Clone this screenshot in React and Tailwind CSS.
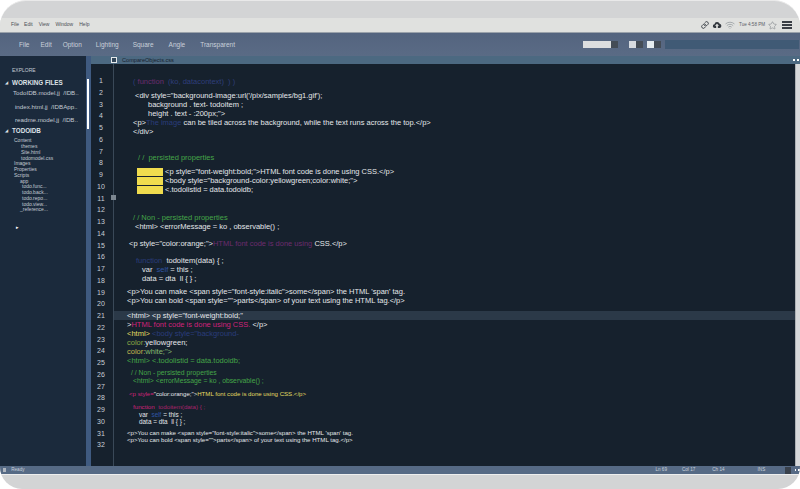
import { Link, Star, Wifi } from 'lucide-react';

const menus = [
    ['File', 'ml-[11px]'],
    ['Edit', 'ml-[5px]'],
    ['View', 'ml-[6px]'],
    ['Window', 'ml-[6px]'],
    ['Help', 'ml-[6px]'],
];

const tools = [
    ['File', 'ml-[19px]'],
    ['Edit', 'ml-[11px]'],
    ['Option', 'ml-[11px]'],
    ['Lighting', 'ml-[14px]'],
    ['Square', 'ml-[14px]'],
    ['Angle', 'ml-[15px]'],
    ['Transparent', 'ml-[15px]'],
];

const tree = [
    ['Content', 'pl-[14px]'],
    ['themes', 'pl-[21px]'],
    ['Site.html', 'pl-[21px]'],
    ['todomodel.css', 'pl-[21px]'],
    ['Images', 'pl-[14px]'],
    ['Properties', 'pl-[14px]'],
    ['Scripts', 'pl-[14px]'],
    ['app', 'pl-[20px]'],
    ['todo.func...', 'pl-[22px]'],
    ['todo.back...', 'pl-[22px]'],
    ['todo.repo...', 'pl-[22px]'],
    ['todo.view...', 'pl-[22px]'],
    ['_reference...', 'pl-[20px]'],
];

const lineNumbers = Array.from({ length: 32 }, (_, i) => i + 1);

function Stepper({ light, wide }) {
    return (
        <div className="flex h-[7px]">
            <div className={wide ? 'w-[28px] bg-[#dcdedf]' : `w-[7px] ${light}`} />
            <div className="w-[7px] bg-[#444c56]" />
        </div>
    );
}

function Sidebar() {
    return (
        <div className="w-[86px] shrink-0 bg-[#1b2a3c] text-[#c3cad3] flex flex-col">
            <div className="h-[8px] mt-[10px] pl-[12px] text-[5px] leading-[8px]">EXPLORE</div>
            <div className="h-[9px] mt-[4px] pl-[5px] flex items-center text-[6.3px] leading-[9px] font-bold text-[#dfe3e8]">
                <span className="w-[7px] text-[4px]">◢</span>WORKING FILES
            </div>
            <div className="h-[9px] mt-[1px] pl-[13px] text-[6.2px] leading-[9px] whitespace-nowrap">TodoIDB.model.jj&nbsp; /IDB..</div>
            <div className="h-[9px] mt-[5px] pl-[15px] text-[6.2px] leading-[9px] whitespace-nowrap">index.html.jj&nbsp; /IDBApp..</div>
            <div className="h-[9px] mt-[4px] pl-[15px] text-[6.2px] leading-[9px] whitespace-nowrap">readme.model.jj&nbsp; /IDB..</div>
            <div className="h-[9px] mt-[2px] pl-[5px] flex items-center text-[6.3px] leading-[9px] font-bold text-[#dfe3e8]">
                <span className="w-[7px] text-[4px]">◢</span>TODOIDB
            </div>
            <div className="mt-[3.3px] flex flex-col text-[5px] leading-[5.75px]">
                {tree.map(([name, indent]) => (
                    <div key={name} className={`h-[5.75px] whitespace-nowrap ${indent}`}>{name}</div>
                ))}
            </div>
            <div className="mt-[10.5px] pl-[16px] text-[5px] leading-[6px] text-white">▸</div>
        </div>
    );
}

function Gutter() {
    return (
        <div className="relative w-[23px] shrink-0 pt-[11px] pr-[2px] border-r border-[#3a4958] flex flex-col text-[7px] text-[#c7ced6]">
            {lineNumbers.map((n) => (
                <div key={n} className="h-[11.76px] leading-[11.76px] text-center">{n}</div>
            ))}
            <div className="absolute left-[20px] top-[131px] w-[5px] h-[5px] bg-[#7d8791]" />
        </div>
    );
}

function Code() {
    const white = 'text-[#e4e7ea]';
    const navy = 'text-[#2a3d7c]';
    const green = 'text-[#45a548]';
    const plum = 'text-[#6c2c6e]';
    const pink = 'text-[#d0227a]';
    const yellow = 'text-[#e3dc62]';
    const mark = 'inline-block w-[26px] h-[8px] mr-[2px] align-middle bg-[#f0dc4e]';

    return (
        <div className={`flex-1 min-w-0 flex flex-col whitespace-nowrap text-[7.5px] ${white}`}>
            <div className="h-[9px] leading-[9px] mt-[12.5px] pl-[19px] text-[#2f3f7c]">( <span className={plum}>function</span>&nbsp; (ko, datacontext)&nbsp; ) )</div>
            <div className="h-[9px] leading-[9px] mt-[5px] pl-[21px]">&lt;div style="background-image:url('/pix/samples/bg1.gif');</div>
            <div className="h-[9px] leading-[9px] pl-[34px]">background . text- todoitem ;</div>
            <div className="h-[9px] leading-[9px] pl-[34px]">height . text - :200px;"&gt;</div>
            <div className="h-[9px] leading-[9px] pl-[19px]">&lt;p&gt;<span className={navy}>The image</span> can be tiled across the background, while the text runs across the top.&lt;/p&gt;</div>
            <div className="h-[9px] leading-[9px] pl-[19px]">&lt;/div&gt;</div>

            <div className={`h-[9px] leading-[9px] mt-[17.3px] pl-[24px] ${green}`}>/ /&nbsp; persisted properties</div>

            <div className="h-[9px] leading-[9px] mt-[5px] pl-[23px]"><span className={mark} />&lt;p style="font-weight:bold;"&gt;HTML font code is done using CSS.&lt;/p&gt;</div>
            <div className="h-[9px] leading-[9px] pl-[23px]"><span className={mark} />&lt;body style="background-color:yellowgreen;color:white;"&gt;</div>
            <div className="h-[9px] leading-[9px] pl-[23px]"><span className={mark} />&lt;.todolistid = data.todoidb;</div>

            <div className={`h-[9px] leading-[9px] mt-[19px] pl-[19px] ${green}`}>/ / Non - persisted properties</div>
            <div className="h-[9.7px] leading-[9.7px] pl-[21px]">&lt;html&gt; &lt;errorMessage = ko , observable() ;</div>
            <div className="h-[9px] leading-[9px] mt-[7.3px] pl-[15px]">&lt;p style="color:orange;"&gt;<span className={plum}>HTML font code is done using</span> CSS.&lt;/p&gt;</div>

            <div className="h-[9px] leading-[9px] mt-[8px] pl-[22px]"><span className={navy}>function</span>&nbsp; todoitem(data) { '{' } ;</div>
            <div className="h-[9px] leading-[9px] pl-[28px]">var&nbsp; <span className="text-[#2f55a5]">self</span> = this ;</div>
            <div className="h-[9px] leading-[9px] pl-[28px]">data = dta&nbsp; ll { '{' } { '}' } ;</div>

            <div className="h-[9px] leading-[9px] mt-[4px] pl-[13px]">&lt;p&gt;You can make &lt;span style="font-style:italic"&gt;some&lt;/span&gt; the HTML 'span' tag.</div>
            <div className="h-[9px] leading-[9px] pl-[13px]">&lt;p&gt;You can bold &lt;span style=""&gt;parts&lt;/span&gt; of your text using the HTML tag.&lt;/p&gt;</div>

            <div className="h-[9px] leading-[9px] mt-[6.7px] pl-[13px] bg-[#2b3948]">&lt;html&gt; &lt;p style="font-weight:bold;"</div>
            <div className="h-[9px] leading-[9px] pl-[13px]">&gt;<span className={pink}>HTML font code is done using CSS.</span> &lt;/p&gt;</div>
            <div className="h-[9px] leading-[9px] pl-[13px]"><span className={yellow}>&lt;html&gt;</span> <span className={navy}>&lt;body style="background-</span></div>
            <div className="h-[9px] leading-[9px] pl-[13px]"><span className="text-[#8aa845]">color:</span>yellowgreen;</div>
            <div className="h-[9px] leading-[9px] pl-[13px]"><span className="text-[#c2b850]">color:</span><span className="text-[#86bb70]">white;"&gt;</span></div>
            <div className={`h-[9px] leading-[9px] pl-[13px] ${green}`}>&lt;html&gt; &lt;.todolistid = data.todoidb;</div>

            <div className={`h-[8px] leading-[8px] mt-[3.5px] pl-[17px] text-[6.8px] ${green}`}>/ / Non - persisted properties</div>
            <div className={`h-[8px] leading-[8px] pl-[19px] text-[6.8px] ${green}`}>&lt;html&gt; &lt;errorMessage = ko , observable() ;</div>

            <div className="h-[8px] leading-[8px] mt-[5px] pl-[15px] text-[6.1px]"><span className={pink}>&lt;p style=</span>"color:orange;"&gt;<span className={yellow}>HTML font code is done using CSS.&lt;/p&gt;</span></div>
            <div className={`h-[8px] leading-[8px] mt-[5px] pl-[19px] text-[6.2px] ${pink}`}>function&nbsp; <span className="text-[#a8226a]">todoitem(data) { '{' } ;</span></div>
            <div className="h-[7px] leading-[7px] mt-[0.5px] pl-[25px] text-[6.4px]">var&nbsp; <span className="text-[#2f55a5]">self</span> = this ;</div>
            <div className="h-[7px] leading-[7px] pl-[25px] text-[6.4px]">data = dta&nbsp; ll { '{' } { '}' } ;</div>

            <div className="h-[7px] leading-[7px] mt-[4px] pl-[13px] text-[6.1px]">&lt;p&gt;You can make &lt;span style="font-style:italic"&gt;some&lt;/span&gt; the HTML 'span' tag.</div>
            <div className="h-[7px] leading-[7px] pl-[13px] text-[6.1px]">&lt;p&gt;You can bold &lt;span style=""&gt;parts&lt;/span&gt; of your text using the HTML tag.&lt;/p&gt;</div>
        </div>
    );
}

export default function App() {
    return (
        <div className="w-[800px] h-[489px] bg-white overflow-hidden [font-family:'Liberation_Sans',Arial,sans-serif]">
            <div className="w-full h-full rounded-t-[26px] rounded-b-[22px] overflow-hidden bg-[#d3d4d5] border-t border-[#e9e9e9] flex flex-col">
                <div className="h-[17px] shrink-0" />

                <div className="h-[14px] shrink-0 bg-[#e0e1df] flex items-center text-[5px] text-[#4b4f55]">
                    {menus.map(([name, gap]) => (
                        <span key={name} className={gap}>{name}</span>
                    ))}
                    <div className="ml-auto mr-[8px] flex items-center text-[#3f444b]">
                        <Link size={8} strokeWidth={3} />
                        <svg viewBox="0 0 24 24" className="ml-[3px] w-[10px] h-[10px] fill-[#33383e]">
                            <path d="M6.5 19a4.5 4.5 0 0 1-.6-8.96A6.5 6.5 0 0 1 18.4 9.1 5 5 0 0 1 18 19h-4v-5h3l-5-5-5 5h3v5z" />
                        </svg>
                        <Wifi size={10} className="ml-[3px] text-[#9aa0a4]" />
                        <span className="ml-[4px] text-[4.6px] text-[#5a6068] w-[25px] whitespace-nowrap">Tue 4:58 PM</span>
                        <Star size={9} strokeWidth={1.5} className="ml-[4px] text-[#7c8288]" />
                        <div className="ml-[5px] w-[10px] flex flex-col gap-[1.5px]">
                            <div className="h-[1.5px] bg-[#3a3f46]" />
                            <div className="h-[1.5px] bg-[#3a3f46]" />
                            <div className="h-[1.5px] bg-[#3a3f46]" />
                        </div>
                    </div>
                </div>

                <div className="h-[24px] shrink-0 border-t border-[#9ba2ab] bg-gradient-to-b from-[#54647f] to-[#5a6b85] flex items-center text-[6.5px] text-[#c9d0da]">
                    {tools.map(([name, gap]) => (
                        <span key={name} className={gap}>{name}</span>
                    ))}
                    <div className="ml-auto flex items-center">
                        <Stepper wide />
                        <div className="ml-[11px]"><Stepper light="bg-[#d7dbe0]" /></div>
                        <div className="ml-[4px]"><Stepper light="bg-[#e6ecef]" /></div>
                        <div className="ml-[4px] w-[134px] h-[9px] mr-[1px] bg-[#405a75]" />
                    </div>
                </div>

                <div className="h-[410px] shrink-0 flex bg-[#16212d]">
                    <Sidebar />
                    <div className="w-[5px] shrink-0 bg-[#3f5a80] pl-[1px] pt-[23px]">
                        <div className="w-[2px] h-[50px] bg-white" />
                    </div>
                    <div className="flex-1 min-w-0 flex flex-col">
                        <div className="h-[8px] shrink-0 bg-[#4c6981] flex items-center text-[5.6px] text-[#17222e]">
                            <div className="ml-[20px] w-[6px] h-[6px] border border-[#e6e9ec] bg-[#33475a]" />
                            <span className="ml-[5px]">CompareObjects.css</span>
                            <div className="ml-auto mr-[1px] flex gap-[2px]">
                                <div className="w-[2px] h-[2px] bg-white" />
                                <div className="w-[2px] h-[2px] bg-white" />
                            </div>
                        </div>
                        <div className="flex-1 min-h-0 flex">
                            <Gutter />
                            <Code />
                            <div className="w-[5px] shrink-0 bg-[#d6d8da] border-l border-[#aeb2b6]" />
                        </div>
                    </div>
                </div>

                <div className="h-[8px] shrink-0 bg-[#566a85] flex items-center whitespace-nowrap text-[4.6px] text-[#c9d0da]">
                    <div className="ml-[3px] w-[4px] h-[4px] bg-[#aeb5bf]" />
                    <span className="ml-[5px]">Ready</span>
                    <span className="ml-[631px]">Ln 69</span>
                    <span className="ml-[15px]">Col 17</span>
                    <span className="ml-[17px]">Ch 14</span>
                    <span className="ml-[33px]">INS</span>
                    <div className="ml-[20px] w-[7px] h-[7px] bg-[#39414c]" />
                    <div className="ml-[4px] w-[2px] h-[2px] bg-white" />
                    <div className="ml-[2px] w-[2px] h-[2px] bg-white" />
                </div>
                <div className="h-[1px] shrink-0 bg-[#eeeeee]" />
            </div>
        </div>
    );
}
